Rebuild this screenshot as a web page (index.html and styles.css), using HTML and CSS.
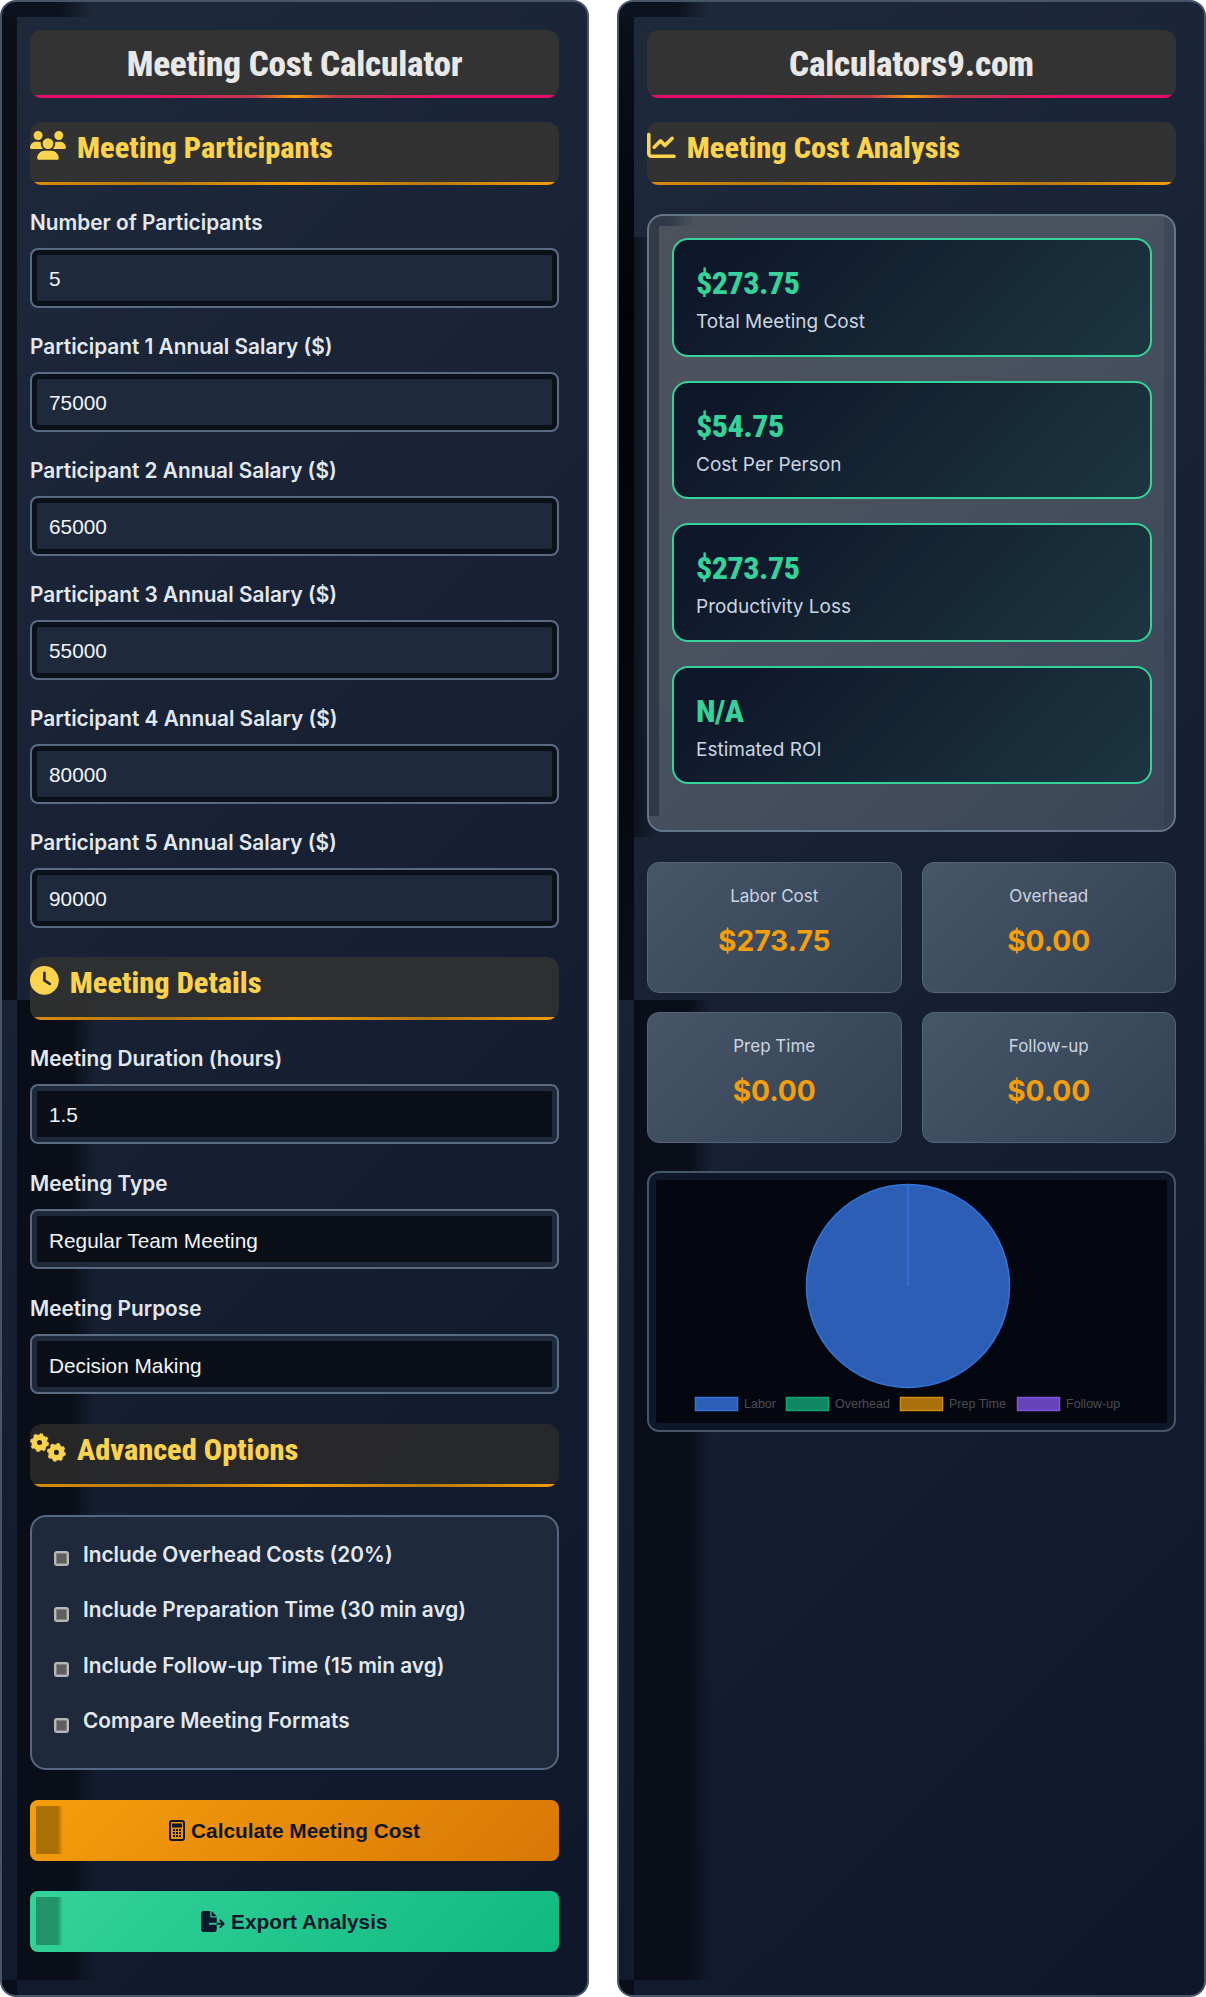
FILE: index.html
```html
<!DOCTYPE html>
<html lang="en">
<head>
<meta charset="UTF-8">
<meta name="viewport" content="width=device-width, initial-scale=1.0">
<title>Meeting Cost Calculator</title>
<link rel="stylesheet" href="styles.css">
</head>

<body>
<div class="layout">

  <div class="panel panel-form">
    <h1 class="title"><span class="cond">Meeting Cost Calculator</span></h1>

    <h2 class="heading">
      <svg class="icon" viewBox="0 0 640 512"><path d="M144 0a80 80 0 1 1 0 160A80 80 0 1 1 144 0zM512 0a80 80 0 1 1 0 160A80 80 0 1 1 512 0zM0 298.7C0 239.8 47.8 192 106.7 192h42.7c15.9 0 31 3.5 44.6 9.7c-1.3 7.2-1.9 14.7-1.9 22.3c0 38.2 16.8 72.5 43.3 96c-.2 0-.4 0-.7 0H21.3C9.6 320 0 310.4 0 298.7zM405.3 320c-.2 0-.4 0-.7 0c26.6-23.5 43.3-57.8 43.3-96c0-7.6-.7-15-1.9-22.3c13.6-6.3 28.7-9.7 44.6-9.7h42.7C592.2 192 640 239.8 640 298.7c0 11.8-9.6 21.3-21.3 21.3H405.3zM224 224a96 96 0 1 1 192 0 96 96 0 1 1 -192 0zM128 485.3C128 411.7 187.7 352 261.3 352H378.7C452.3 352 512 411.7 512 485.3c0 14.7-11.9 26.7-26.7 26.7H154.7c-14.7 0-26.7-11.9-26.7-26.7z"/></svg>
      <span class="cond">Meeting Participants</span>
    </h2>

    <div class="field">
      <label for="count">Number of Participants</label>
      <input type="text" id="count" value="5">
    </div>
    <div class="field">
      <label for="s1">Participant 1 Annual Salary ($)</label>
      <input type="text" id="s1" value="75000">
    </div>
    <div class="field">
      <label for="s2">Participant 2 Annual Salary ($)</label>
      <input type="text" id="s2" value="65000">
    </div>
    <div class="field">
      <label for="s3">Participant 3 Annual Salary ($)</label>
      <input type="text" id="s3" value="55000">
    </div>
    <div class="field">
      <label for="s4">Participant 4 Annual Salary ($)</label>
      <input type="text" id="s4" value="80000">
    </div>
    <div class="field field-last">
      <label for="s5">Participant 5 Annual Salary ($)</label>
      <input type="text" id="s5" value="90000">
    </div>

    <h2 class="heading heading-mid">
      <svg class="icon" viewBox="0 0 512 512"><path d="M256 0a256 256 0 1 1 0 512A256 256 0 1 1 256 0zM232 120V256c0 8 4 15.5 10.7 20l96 64c11 7.4 25.9 4.4 33.3-6.7s4.4-25.9-6.7-33.3L280 243.2V120c0-13.3-10.7-24-24-24s-24 10.7-24 24z"/></svg>
      <span class="cond">Meeting Details</span>
    </h2>

    <div class="field field-wide">
      <label for="duration">Meeting Duration (hours)</label>
      <input class="dark" type="text" id="duration" value="1.5">
    </div>
    <div class="field field-wide">
      <label for="type">Meeting Type</label>
      <select class="dark" id="type"><option>Regular Team Meeting</option></select>
    </div>
    <div class="field field-last">
      <label for="purpose">Meeting Purpose</label>
      <select class="dark" id="purpose"><option>Decision Making</option></select>
    </div>

    <h2 class="heading heading-low">
      <svg class="icon" viewBox="0 0 640 512">
        <g transform="translate(170 170)"><circle r="95" class="gear-ring"/><circle r="145" class="gear-teeth"/></g>
        <g transform="translate(470 345)"><circle r="95" class="gear-ring"/><circle r="145" class="gear-teeth"/></g>
      </svg>
      <span class="cond">Advanced Options</span>
    </h2>

    <div class="options">
      <label class="option"><input type="checkbox" checked> Include Overhead Costs (20%)</label>
      <label class="option"><input type="checkbox" checked> Include Preparation Time (30 min avg)</label>
      <label class="option"><input type="checkbox" checked> Include Follow-up Time (15 min avg)</label>
      <label class="option"><input type="checkbox" checked> Compare Meeting Formats</label>
    </div>

    <button class="btn btn-calc">
      <svg class="btn-icon" viewBox="0 0 16 21"><rect x="1" y="1" width="14" height="19" rx="2"/><path d="M4 4.5h8v2H4z"/><path d="M4 10h2M7 10h2M10 10h2M4 13h2M7 13h2M10 13h2M4 16h2M7 16h2M10 16h2"/></svg>
      Calculate Meeting Cost
    </button>
    <button class="btn btn-export">
      <svg class="btn-icon-solid" viewBox="0 0 576 512"><path d="M0 64C0 28.7 28.7 0 64 0H224V128c0 17.7 14.3 32 32 32H384V288H216c-13.3 0-24 10.7-24 24s10.7 24 24 24H384V448c0 35.3-28.7 64-64 64H64c-35.3 0-64-28.7-64-64V64zM384 336V288H494.1l-39-39c-9.4-9.4-9.4-24.6 0-33.9s24.6-9.4 33.9 0l80 80c9.4 9.4 9.4 24.6 0 33.9l-80 80c-9.4 9.4-24.6 9.4-33.9 0s-9.4-24.6 0-33.9l39-39H384zm0-208H256V0L384 128z"/></svg>
      Export Analysis
    </button>
  </div>

  <div class="panel panel-results">
    <h1 class="title"><span class="cond">Calculators9.com</span></h1>

    <h2 class="heading">
      <svg class="icon" viewBox="0 0 512 512"><path d="M64 64c0-17.7-14.3-32-32-32S0 46.3 0 64V400c0 44.2 35.8 80 80 80H480c17.7 0 32-14.3 32-32s-14.3-32-32-32H80c-8.8 0-16-7.2-16-16V64zm406.6 86.6c12.5-12.5 12.5-32.8 0-45.3s-32.8-12.5-45.3 0L320 210.7l-57.4-57.4c-12.5-12.5-32.8-12.5-45.3 0l-112 112c-12.5 12.5-12.5 32.8 0 45.3s32.8 12.5 45.3 0L240 221.3l57.4 57.4c12.5 12.5 32.8 12.5 45.3 0l128-128z"/></svg>
      <span class="cond">Meeting Cost Analysis</span>
    </h2>

    <div class="results">
      <div class="stat">
        <div class="stat-value"><span class="cond">$273.75</span></div>
        <div class="stat-label">Total Meeting Cost</div>
      </div>
      <div class="stat">
        <div class="stat-value"><span class="cond">$54.75</span></div>
        <div class="stat-label">Cost Per Person</div>
      </div>
      <div class="stat">
        <div class="stat-value"><span class="cond">$273.75</span></div>
        <div class="stat-label">Productivity Loss</div>
      </div>
      <div class="stat">
        <div class="stat-value"><span class="cond">N/A</span></div>
        <div class="stat-label">Estimated ROI</div>
      </div>
    </div>

    <div class="breakdown">
      <div class="item"><div class="item-label">Labor Cost</div><div class="item-value">$273.75</div></div>
      <div class="item"><div class="item-label">Overhead</div><div class="item-value">$0.00</div></div>
      <div class="item"><div class="item-label">Prep Time</div><div class="item-value">$0.00</div></div>
      <div class="item"><div class="item-label">Follow-up</div><div class="item-value">$0.00</div></div>
    </div>

    <div class="chart">
      <svg class="chart-svg" viewBox="0 0 524 257">
        <circle class="pie" cx="259" cy="113" r="101.5"/>
        <line class="pie-line" x1="259" y1="113" x2="259" y2="11"/>
        <rect class="sw sw-blue" x="46.5" y="224.5" width="42" height="13"/>
        <text class="lg" x="95" y="235">Labor</text>
        <rect class="sw sw-green" x="137.5" y="224.5" width="42" height="13"/>
        <text class="lg" x="186" y="235">Overhead</text>
        <rect class="sw sw-amber" x="251.5" y="224.5" width="42" height="13"/>
        <text class="lg" x="300" y="235">Prep Time</text>
        <rect class="sw sw-violet" x="368.5" y="224.5" width="42" height="13"/>
        <text class="lg" x="417" y="235">Follow-up</text>
      </svg>
    </div>
  </div>

</div>
</body>
</html>
```

FILE: styles.css
```css
* {
  box-sizing: border-box;
}

body {
  margin: 0;
  background: #fff;
  font-family: Inter, "Liberation Sans", sans-serif;
  line-height: 1.6;
  color: #e2e8f0;
}

.layout {
  display: grid;
  grid-template-columns: 1fr 1fr;
  gap: 28px;
  min-height: 100vh;
}

.panel {
  border: 2px solid #475569;
  border-radius: 16px;
  padding: 28px;
  background:
    linear-gradient(to right, #0c131e 65%, transparent) 0 0 / 90px 15px no-repeat,
    linear-gradient(#0a0f18, #0a0f18) 0 15px / 15px 983px no-repeat,
    linear-gradient(to right, #0a0e18 70%, transparent) 15px 998px / 78px 980px no-repeat,
    linear-gradient(#0a0e18, #0a0e18) 0 100% / 15px 15px no-repeat,
    linear-gradient(135deg, #1e293b, #0f172a);
}

.panel-results {
  background:
    linear-gradient(to right, #0c131e 65%, transparent) 0 0 / 90px 15px no-repeat,
    linear-gradient(to bottom, #0b1119, #020308 30%, #05070d 70%, #0a0e16) 0 15px / 15px 983px no-repeat,
    linear-gradient(to right, rgba(2, 3, 8, 0.5), transparent) 15px 235px / 24px 600px no-repeat,
    linear-gradient(to right, #0a0e18 70%, transparent) 15px 998px / 78px 980px no-repeat,
    linear-gradient(#0a0e18, #0a0e18) 0 100% / 15px 15px no-repeat,
    linear-gradient(135deg, #1e293b, #0f172a);
}

.cond {
  display: inline-block;
  font-family: "Roboto Condensed", Roboto, sans-serif;
  font-stretch: 75%;
  font-weight: 800;
}

.title {
  position: relative;
  height: 68px;
  margin: 0 0 24px;
  border-radius: 12px;
  background: #333;
  font-size: 35.2px;
  line-height: 67px;
  letter-spacing: -0.22px;
  text-align: center;
  color: #e8e8e6;
  overflow: hidden;
}

.title::after,
.heading::after {
  content: "";
  position: absolute;
  left: 2px;
  right: 2px;
  bottom: 0;
  height: 3px;
  border-radius: 0 0 8px 8px;
  background: linear-gradient(90deg, #ec0a6e 20%, #c03a4a 42%, #f59e0b 50%, #c03a4a 58%, #ec0a6e 80%);
}

.heading {
  position: relative;
  display: flex;
  align-items: flex-start;
  gap: 11px;
  height: 63px;
  margin: 0 0 24px;
  border-radius: 12px;
  background: #323232;
  font-size: 30.4px;
  line-height: 52px;
  color: #fcd34d;
  overflow: hidden;
}

.heading::after {
  background: linear-gradient(90deg, #d98a0a, #b97a12 25%, #f59e0b 50%, #b97a12 75%, #f59e0b);
}

.heading-mid {
  margin-top: 29px;
  margin-bottom: 25px;
  background: rgba(48, 48, 48, 0.93);
}

.heading-low {
  margin-top: 30px;
  margin-bottom: 28px;
  background: rgba(42, 42, 42, 0.9);
}

.icon {
  flex: none;
  height: 28.8px;
  margin-top: 9px;
  fill: #fcd34d;
}

.gear-ring {
  fill: none;
  stroke: #fcd34d;
  stroke-width: 100;
}

.gear-teeth {
  fill: none;
  stroke: #fcd34d;
  stroke-width: 45;
  stroke-dasharray: 57 57;
}

.field {
  margin-bottom: 25px;
}

.field-wide {
  margin-bottom: 26px;
}

.field-last {
  margin-bottom: 0;
}

.field label {
  display: block;
  margin-bottom: 11px;
  font-size: 20.8px;
  line-height: 28px;
  font-weight: 600;
}

.field input,
.field select {
  display: block;
  width: 100%;
  height: 60px;
  padding: 2px 17px 0;
  border: 2px solid #5a6a82;
  border-radius: 8px;
  background: #1e293b;
  box-shadow: inset 0 0 0 5px #0b1019;
  font-family: "Liberation Sans", Arial, sans-serif;
  font-size: 20.8px;
  color: #f1f5f9;
  appearance: none;
}

.field .dark {
  background: #0b0f17;
  box-shadow: inset 0 0 0 5px #1e293b;
}

.options {
  height: 255px;
  margin-bottom: 30px;
  padding: 22px 22px;
  border: 2px solid #566783;
  border-radius: 16px;
  background: #1e293b;
}

.option {
  display: flex;
  align-items: center;
  gap: 14px;
  height: 31px;
  margin-bottom: 24.5px;
  font-size: 20.8px;
  font-weight: 600;
}

.option input {
  flex: none;
  position: relative;
  top: 4px;
  width: 15px;
  height: 15px;
  margin: 0;
  border: 2px solid #b8b8b8;
  border-radius: 3px;
  background: #5f5f5f;
  box-shadow: inset 0 0 0 1px #858585;
  appearance: none;
}

.btn {
  position: relative;
  display: flex;
  align-items: center;
  justify-content: center;
  gap: 6px;
  width: 100%;
  height: 61px;
  margin-bottom: 30px;
  padding: 0;
  border: 0;
  border-radius: 8px;
  font-family: "Liberation Sans", Arial, sans-serif;
  font-size: 20.8px;
  font-weight: 700;
  color: #0f172a;
}

.btn::before {
  content: "";
  position: absolute;
  left: 6px;
  top: 6px;
  bottom: 7px;
  width: 27px;
}

.btn-calc {
  background: linear-gradient(135deg, #f59e0b, #d97706);
}

.btn-calc::before {
  background: linear-gradient(to right, #a87005 80%, transparent);
}

.btn-export {
  margin-bottom: 0;
  background: linear-gradient(135deg, #34d399, #10b981);
}

.btn-export::before {
  background: linear-gradient(to right, #23936c 80%, transparent);
}

.btn-icon {
  width: 16px;
  height: 21px;
  fill: none;
  stroke: #0f172a;
  stroke-width: 2;
}

.btn-icon-solid {
  height: 21px;
  fill: #0f172a;
}

.results {
  height: 618px;
  margin-top: 29px;
  margin-bottom: 30px;
  padding: 22px 22px 22px 23px;
  border: 2px solid #64748b;
  border-radius: 16px;
  background:
    linear-gradient(to right, #2f3949 40%, transparent) 0 0 / 46px 10px no-repeat,
    linear-gradient(rgba(20, 28, 42, 0.45), rgba(20, 28, 42, 0.45)) 0 10px / 10px 590px no-repeat,
    linear-gradient(rgba(40, 55, 80, 0.35), rgba(40, 55, 80, 0.35)) 100% 0 / 10px 100% no-repeat,
    linear-gradient(135deg, #4d525c, #4a5260 40%, #3a4657);
}

.stat {
  height: 118.6px;
  margin-bottom: 24px;
  padding: 22px 22px;
  border: 2px solid #34d399;
  border-radius: 16px;
  background: linear-gradient(135deg, #0f172a 10%, #1c3640);
}

.stat-value {
  font-size: 32px;
  line-height: 42px;
  letter-spacing: -0.5px;
  color: #34d399;
}

.stat-label {
  margin-top: 4px;
  font-size: 19px;
  line-height: 28px;
  color: #cbd5e1;
}

.breakdown {
  display: grid;
  grid-template-columns: 1fr 1fr;
  gap: 19px 20px;
  margin-bottom: 28px;
}

.item {
  height: 131px;
  padding: 20px 16px;
  border: 1px solid #56657d;
  border-radius: 12px;
  background: linear-gradient(135deg, #475569, #334155);
  text-align: center;
}

.item-label {
  font-size: 17px;
  line-height: 26px;
  color: #cbd5e1;
}

.item-value {
  margin-top: 10px;
  font-size: 28.2px;
  font-weight: 700;
  color: #f59e0b;
}

.chart {
  height: 261px;
  border: 2px solid #475569;
  border-radius: 12px;
  background: #04070f;
  box-shadow: inset 0 0 0 7px #0f172a;
}

.chart-svg {
  display: block;
  width: 524px;
  height: 257px;
}

.pie {
  fill: #2b5eb4;
  stroke: #3475d8;
  stroke-width: 1.5;
}

.pie-line {
  stroke: #3475d8;
  stroke-width: 1.5;
}

.sw {
  stroke-width: 1.5;
}

.sw-blue {
  fill: #2b5eb4;
  stroke: #3475d8;
}

.sw-green {
  fill: #0d8661;
  stroke: #10a577;
}

.sw-amber {
  fill: #a86f0b;
  stroke: #d08a0c;
}

.sw-violet {
  fill: #6544b8;
  stroke: #7c55e0;
}

.lg {
  font-family: "Liberation Sans", Arial, sans-serif;
  font-size: 12.5px;
  fill: #4b4e53;
}
```
